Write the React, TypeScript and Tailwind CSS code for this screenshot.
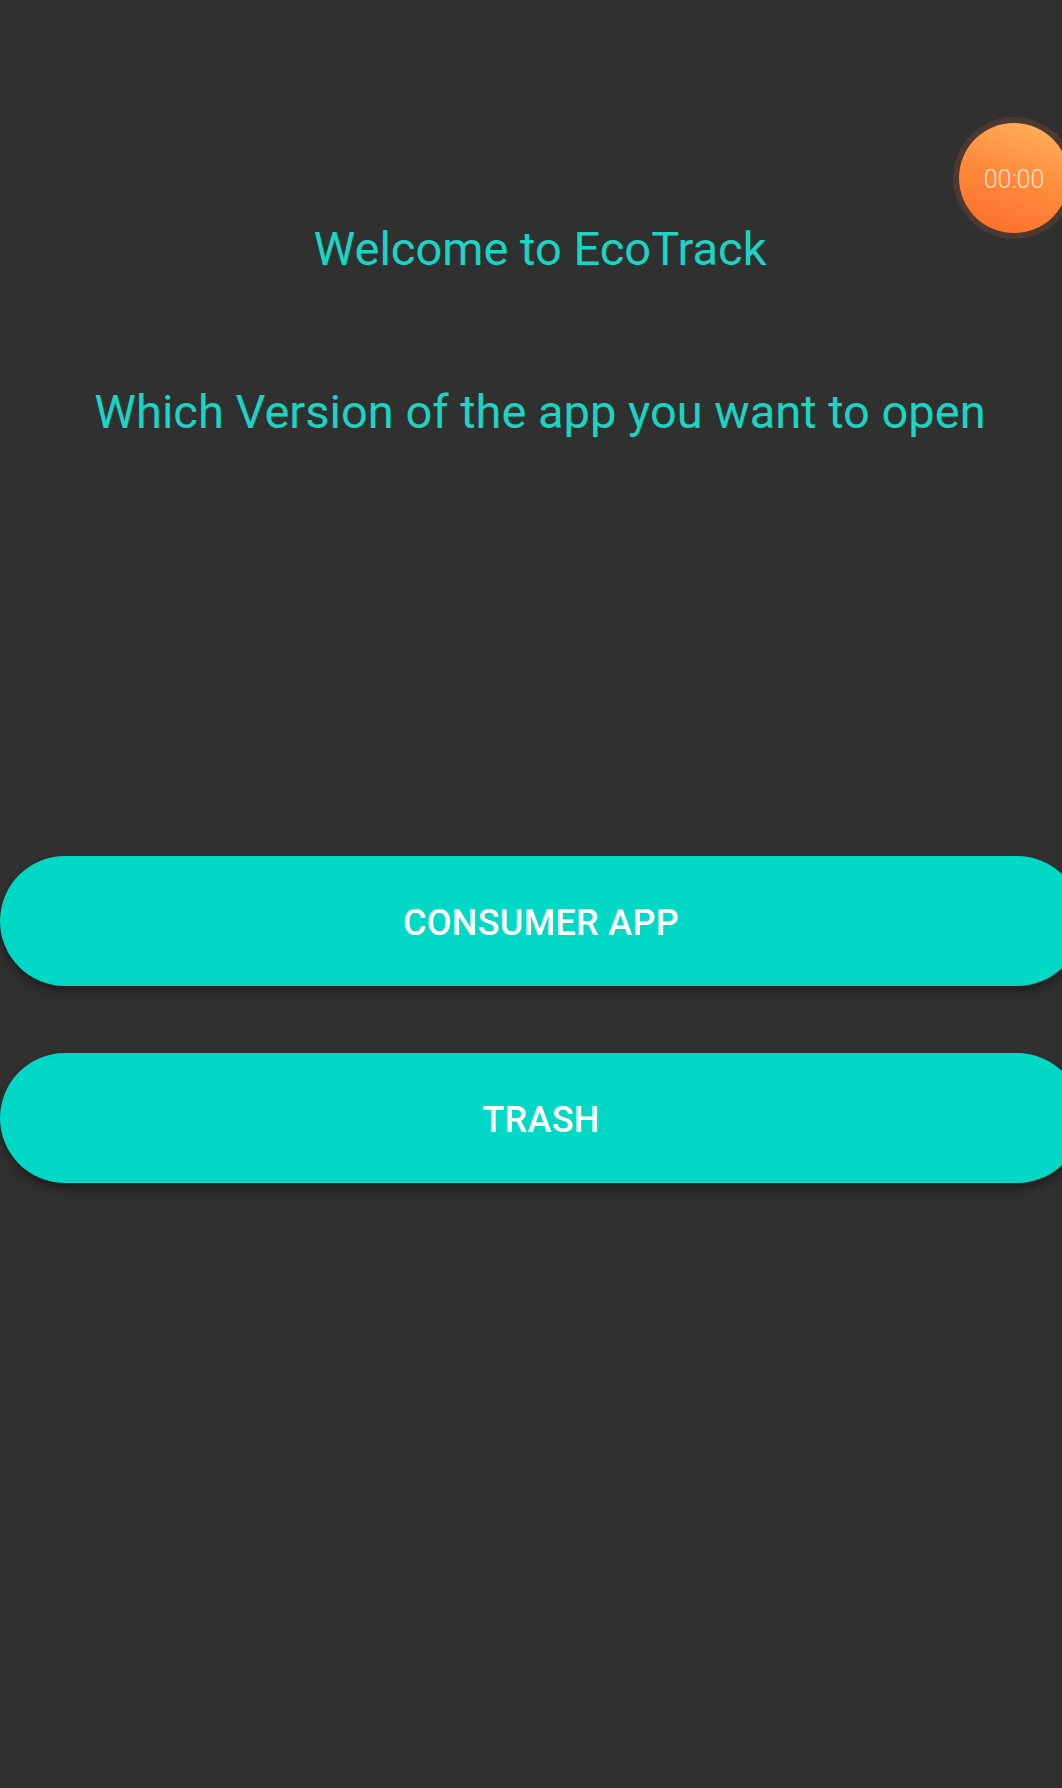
import React from "react";

export default function App() {
  return (
    <div className="relative w-[1062px] h-[1788px] overflow-hidden bg-[#303030] font-['Roboto','Liberation_Sans',sans-serif]">
      <div className="w-[1080px] flex flex-col items-center pt-[222px]">
        <h1 className="text-[47px] leading-[54px] font-normal text-[#19d5c4]">Welcome to EcoTrack</h1>
        <p className="mt-[109px] text-[47px] leading-[54px] font-normal text-[#19d5c4] whitespace-nowrap">
          Which Version of the app you want to open
        </p>
      </div>
      <div className="mt-[417px] flex flex-col gap-[67px] w-[1082px]">
        <button className="h-[130px] w-full rounded-full bg-[#02d8c6] pt-[4px] text-white text-[36px] font-medium tracking-[0.3px] shadow-[0_6px_10px_rgba(0,0,0,0.35)]">
          CONSUMER APP
        </button>
        <button className="h-[130px] w-full rounded-full bg-[#02d8c6] pt-[4px] text-white text-[36px] font-medium tracking-[0.3px] shadow-[0_6px_10px_rgba(0,0,0,0.35)]">
          TRASH
        </button>
      </div>
      <div className="absolute left-[953px] top-[117px] w-[122px] h-[122px] rounded-full bg-[#4a3a31] flex items-center justify-center">
        <div className="w-[110px] h-[110px] rounded-full bg-[linear-gradient(200deg,#ffb55e_0%,#ff8a3c_50%,#ff6a2a_100%)] flex items-center justify-center pt-[4px]">
          <span className="text-[25px] text-[#ffe3cc] font-light">00:00</span>
        </div>
      </div>
    </div>
  );
}
